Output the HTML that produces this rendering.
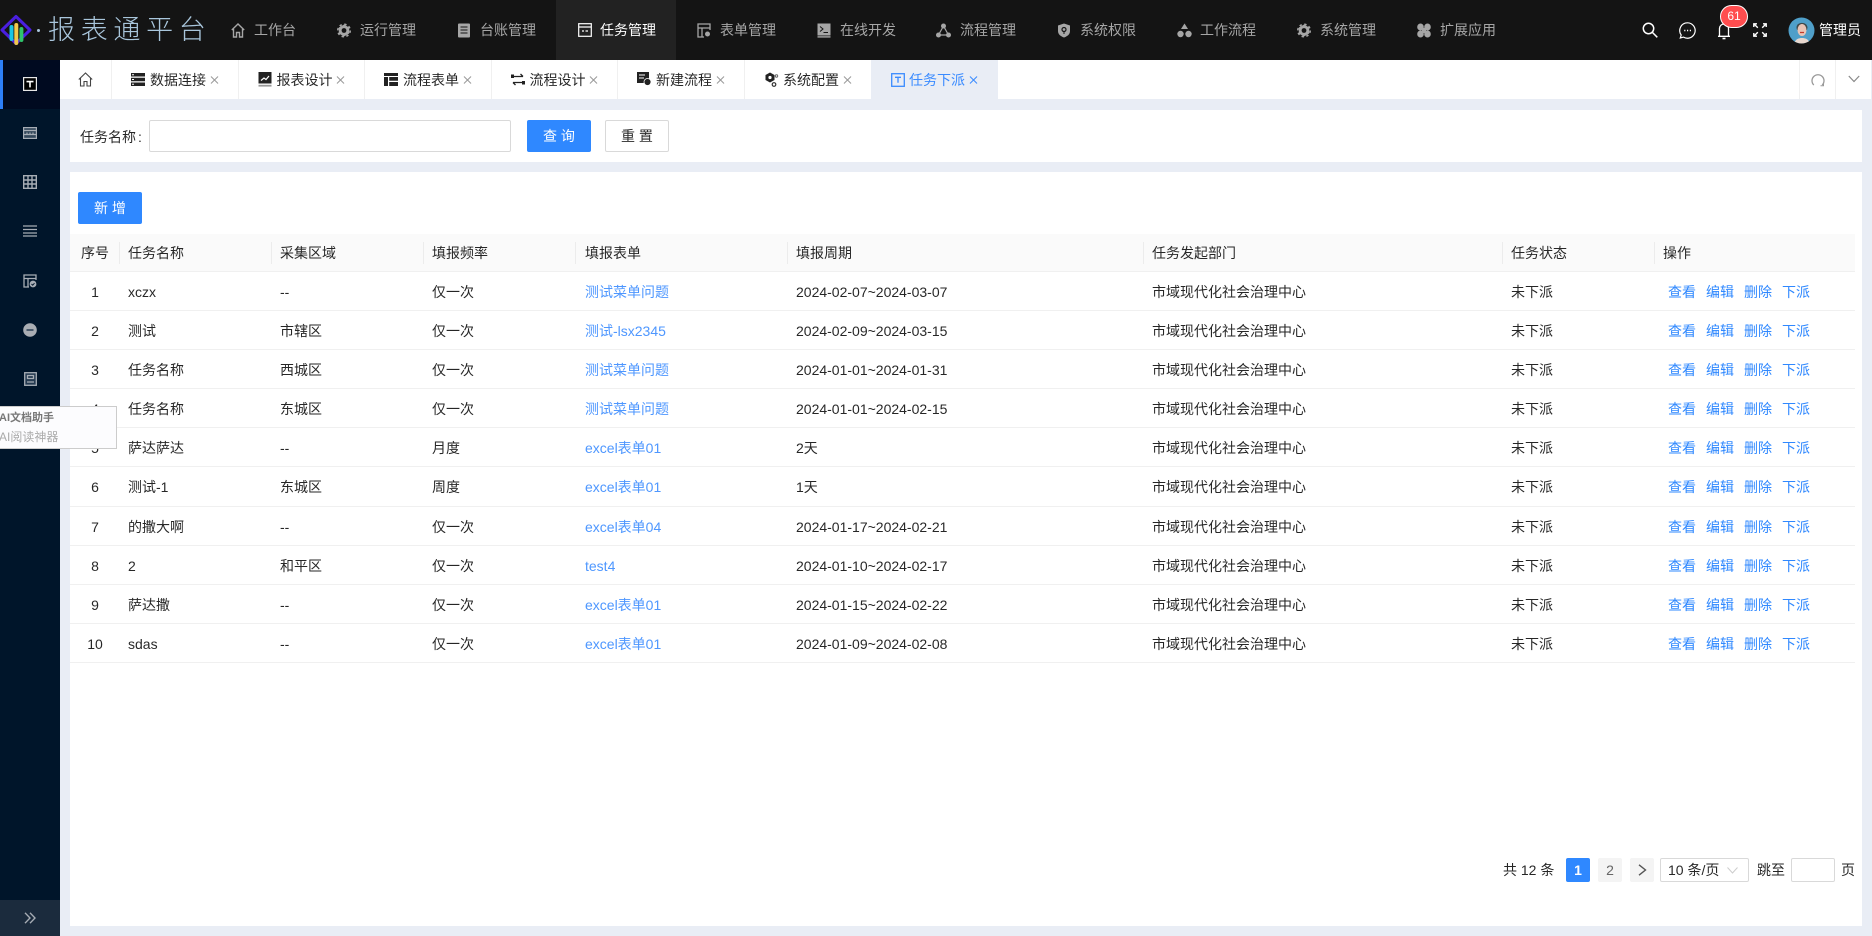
<!DOCTYPE html>
<html lang="zh"><head><meta charset="utf-8"><title>任务下派</title>
<style>
*{box-sizing:border-box}
html,body{margin:0;padding:0;width:1872px;height:936px;overflow:hidden;background:#e9edf5;font:14px/22px "Liberation Sans","Noto Sans CJK SC",sans-serif;color:rgba(0,0,0,.85)}
.a{position:absolute;white-space:nowrap}
svg{position:absolute;display:block;overflow:visible}
#top{position:absolute;left:0;top:0;width:1872px;height:60px;background:#141414}
#top .n{position:absolute;top:19px;color:#a6a6a6;white-space:nowrap}
#side{position:absolute;left:0;top:60px;width:60px;height:876px;background:#00152a}
#tabs{position:absolute;left:60px;top:60px;width:1811px;height:39px;background:#fff}
.tab{position:absolute;top:0;height:39px;width:126.5px;border-right:1px solid #f0f0f0;color:rgba(0,0,0,.85)}
.tab span{position:absolute;left:38px;top:9px;white-space:nowrap}
.tab u{position:absolute;left:98px;top:16px;width:8px;height:8px;text-decoration:none}
.tab u:before,.tab u:after{content:"";position:absolute;left:3.5px;top:-1px;width:1px;height:10px;background:#999;transform:rotate(45deg)}
.tab u:after{transform:rotate(-45deg)}
.tab.on{background:#e9edf5;color:#3a8bff;border-right:0}
.tab.on u:before,.tab.on u:after{background:#3a8bff}
.card{position:absolute;background:#fff}
.btn{position:absolute;height:32px;width:64px;border-radius:2px;background:#2f88ff;color:#fff;text-align:center;line-height:32px}
.btn.w{background:#fff;border:1px solid #d9d9d9;color:rgba(0,0,0,.85);line-height:31px}
#tbl{position:absolute;left:70px;top:234px;width:1785px}
.r{display:flex;height:39.1px;border-bottom:1px solid #f0f0f0;background:#fff;line-height:41px}
.r>div{flex:none;padding-left:8px;white-space:nowrap;position:relative}
.r>div:nth-child(1){width:50px;padding:0;text-align:center}
.r>div:nth-child(2),.r>div:nth-child(3),.r>div:nth-child(4){width:152px}
.r>div:nth-child(5){width:212px;padding-left:9px}
.r>div:nth-child(6){width:356px}
.r>div:nth-child(7){width:359px}
.r>div:nth-child(8){width:152px}
.r>div:nth-child(9){width:200px;padding-left:13px;color:#2f88ff}
.r>div:nth-child(9) b{font-weight:400;margin-right:10px}
.r>div:nth-child(5){color:#4e97ff}
.h{background:#fafafa;height:38px;line-height:38px}
.h>div:nth-child(5){color:rgba(0,0,0,.85)}
.h>div:nth-child(9){color:rgba(0,0,0,.85);padding-left:8px}
.h>div:not(:last-child):after{content:"";position:absolute;right:0;top:8px;height:22px;width:1px;background:#ececec}
.pg{position:absolute;top:858px;width:24px;height:24px;border-radius:2px;background:#f4f4f4;text-align:center;line-height:24px;color:#666}
</style></head><body>

<div id="top">
<svg style="left:0;top:14px" width="34" height="32" viewBox="0 0 34 32"><path d="M16 2.5 30 16 16 29.5 2 16Z" fill="none" stroke="#4a1fe0" stroke-width="3" stroke-linejoin="round"/><rect x="9.5" y="11" width="4" height="16" rx="2" fill="#19c6e6"/><rect x="14.3" y="9" width="4" height="22" rx="2" fill="#f2c94c"/><rect x="19.4" y="13" width="4" height="15" rx="2" fill="#2fc56b"/></svg>
<div class="a" style="left:37px;top:29px;width:3px;height:3px;border-radius:50%;background:#a9c6dc"></div>
<div class="a" style="left:48px;top:12px;font-size:27px;line-height:36px;letter-spacing:5.7px;color:#a9c6dc;font-weight:300">报表通平台</div>

<div class="a" style="left:556px;top:0;width:120px;height:60px;background:#222"></div>

<svg style="left:231px;top:23px" width="14" height="15" viewBox="0 0 14 15" fill="none" stroke="#a6a6a6" stroke-width="1.4"><path d="M.8 7 7 1l6.2 6M2.5 6v8h3V9.5h3V14h3V6"/></svg><div class="n" style="left:254px">工作台</div>
<svg style="left:337px;top:23px" width="14" height="15" viewBox="0 0 14 15"><circle cx="7" cy="7.500" r="6.200" fill="none" stroke="#a6a6a6" stroke-width="1.600" stroke-dasharray="2.400 2.470"/><path d="M7 1.500 12.200 4.500v6L7 13.500 1.800 10.500v-6Z" fill="#a6a6a6"/><circle cx="7" cy="7.500" r="2.400" fill="#141414"/></svg><div class="n" style="left:360px">运行管理</div>
<svg style="left:457px;top:23px" width="14" height="15" viewBox="0 0 14 15"><rect x="1" y="0.5" width="12" height="14" rx="1" fill="#a6a6a6"/><path d="M3.5 4h7M3.5 7h7M3.500 10h7" stroke="#141414"/></svg><div class="n" style="left:480px">台账管理</div>
<svg style="left:578px;top:23px" width="14" height="14" viewBox="0 0 14 14" fill="none" stroke="#fff" stroke-width="1.2"><rect x=".7" y=".7" width="12.6" height="12.6"/><path d="M.7 4h12.6M4 8H6M7.500 8H10" /></svg><div class="n" style="left:600px;color:#fff">任务管理</div>
<svg style="left:697px;top:23px" width="14" height="15" viewBox="0 0 14 15" fill="none" stroke="#a6a6a6" stroke-width="1.3"><path d="M13 7V1H1v13h6M1 5h12M5 5v9"/><circle cx="10.500" cy="11" r="2.500" fill="#a6a6a6" stroke="none"/></svg><div class="n" style="left:720px">表单管理</div>
<svg style="left:817px;top:23px" width="14" height="15" viewBox="0 0 14 15"><rect x=".5" y=".5" width="13" height="12" fill="#a6a6a6"/><rect x=".5" y="13.200" width="13" height="1.400" fill="#a6a6a6"/><path d="M3 3.500l3 2.500-3 2.500M6.500 9.500H11" fill="none" stroke="#141414"/></svg><div class="n" style="left:840px">在线开发</div>
<svg style="left:936px;top:23px" width="15" height="15" viewBox="0 0 15 15" fill="#a6a6a6"><circle cx="7.500" cy="3" r="2.500"/><circle cx="2.500" cy="12" r="2.500"/><circle cx="12.500" cy="12" r="2.500"/><path d="M7.500 3 2.500 12h10Z" fill="none" stroke="#a6a6a6" stroke-width="1.200"/></svg><div class="n" style="left:960px">流程管理</div>
<svg style="left:1057px;top:23px" width="14" height="15" viewBox="0 0 14 15"><path d="M7 .5 13 2.500V8c0 3.500-3 5.500-6 6.500C4 13.500 1 11.500 1 8V2.500Z" fill="#a6a6a6"/><circle cx="7" cy="6.500" r="2" fill="none" stroke="#141414" stroke-width="1.200"/><path d="M7 8.500V11" stroke="#141414"/></svg><div class="n" style="left:1080px">系统权限</div>
<svg style="left:1177px;top:23px" width="15" height="15" viewBox="0 0 15 15" fill="#a6a6a6"><path d="M7.500.5 11 6H4Z"/><circle cx="3.500" cy="11" r="3.200"/><circle cx="11.500" cy="11" r="3.200"/></svg><div class="n" style="left:1200px">工作流程</div>
<svg style="left:1297px;top:23px" width="14" height="15" viewBox="0 0 14 15"><circle cx="7" cy="7.500" r="6.200" fill="none" stroke="#a6a6a6" stroke-width="1.600" stroke-dasharray="2.400 2.470"/><path d="M7 1.500 12.200 4.500v6L7 13.500 1.800 10.500v-6Z" fill="#a6a6a6"/><circle cx="7" cy="7.500" r="2.400" fill="#141414"/></svg><div class="n" style="left:1320px">系统管理</div>
<svg style="left:1417px;top:23px" width="14" height="15" viewBox="0 0 14 15" fill="#a6a6a6"><ellipse cx="3.500" cy="4" rx="3.300" ry="3.500"/><ellipse cx="10.500" cy="4" rx="3.300" ry="3.500"/><ellipse cx="3.500" cy="11" rx="3.300" ry="3.500"/><ellipse cx="10.500" cy="11" rx="3.300" ry="3.500"/><rect x="5" y="5" width="4" height="5"/></svg><div class="n" style="left:1440px">扩展应用</div>

<svg style="left:1642px;top:22px" width="16" height="16" viewBox="0 0 16 16" fill="none" stroke="#fff" stroke-width="1.500"><circle cx="6.500" cy="6.500" r="5.200"/><path d="M10.500 10.500 15.300 15.300"/></svg>
<svg style="left:1679px;top:22px" width="17" height="17" viewBox="0 0 17 17" fill="none" stroke="#fff" stroke-width="1.200"><path d="M8.500.8a7.700 7.700 0 1 1-4 14.300l-3.200.9.900-3A7.700 7.700 0 0 1 8.500.8Z"/><path d="M5.200 8.500h1.200M8 8.500h1.200M10.800 8.500h1.200" stroke-width="1.400"/></svg>
<svg style="left:1717px;top:22px" width="14" height="18" viewBox="0 0 14 18" fill="none" stroke="#fff" stroke-width="1.300"><path d="M1 14.300h12M2.500 14V6.500a4.500 4.500 0 0 1 9 0V14"/><path d="M5.500 16.500h3" stroke-width="1.600"/></svg>
<div class="a" style="left:1720px;top:5px;width:28px;height:23px;border-radius:12px;background:#ff4d4f;border:1px solid #fff;color:#fff;font-size:12px;line-height:21px;text-align:center">61</div>
<svg style="left:1753px;top:23px" width="14" height="14" viewBox="0 0 14 14" fill="none" stroke="#fff" stroke-width="1.400"><path d="M.8 4V.8H4M.8.8l4 4M13.200 4V.8H10M13.200.8l-4 4M.8 10v3.200H4M.8 13.200l4-4M13.200 10v3.200H10M13.200 13.200l-4-4"/></svg>
<svg style="left:1788px;top:17px" width="27" height="27" viewBox="0 0 27 27"><clipPath id="av"><circle cx="13.500" cy="13.500" r="13"/></clipPath><g clip-path="url(#av)"><rect width="27" height="27" fill="#4f9fc9"/><path d="M8.500 11C8 4.500 19 4 19.500 10.500L19 13H9Z" fill="#3f4a4c"/><ellipse cx="14" cy="13" rx="4.500" ry="6" fill="#e9c4b6"/><path d="M12 15.500h4" stroke="#c0392b" stroke-width="1.200"/><path d="M6 27c1-5 5-6 8-6s7 1 8 6Z" fill="#e9d8cf"/></g></svg>
<div class="a" style="left:1819px;top:19px;color:#fff">管理员</div>
</div>

<div id="side">
<div class="a" style="left:0;top:0;width:60px;height:49px;background:#000a20"></div>
<div class="a" style="left:0;top:0;width:3px;height:49px;background:#2d7ff9"></div>
<svg style="left:23px;top:17px" width="14" height="14" viewBox="0 0 14 14"><rect x=".6" y=".6" width="12.800" height="12.800" fill="#000" stroke="#e6e6e6" stroke-width="1.200"/><path d="M3.500 3.800h7v1.600H7.800v5H6.200v-5H3.500Z" fill="#fff"/></svg>
<svg style="left:23px;top:66px" width="14" height="14" viewBox="0 0 14 14" fill="none" stroke="#a7adb5" stroke-width="1.200"><rect x=".6" y="1.600" width="12.800" height="10.800" fill="#33475a"/><path d="M.6 4.500h12.800M.6 8.500h12.800M4 6.500v2M7 6.500v2M10 6.500v2"/></svg>
<svg style="left:23px;top:115px" width="14" height="14" viewBox="0 0 14 14" fill="none" stroke="#a7adb5" stroke-width="1.400"><rect x=".7" y=".7" width="12.600" height="12.600"/><path d="M.7 5h12.600M.7 9h12.600M5 .7v12.600M9 .7v12.600"/></svg>
<svg style="left:23px;top:165px" width="14" height="12" viewBox="0 0 14 12" stroke="#a7adb5" stroke-width="1.300"><path d="M0 1h14M0 4.500h14M0 8h14M0 11h14"/></svg>
<svg style="left:23px;top:214px" width="14" height="14" viewBox="0 0 14 14" fill="none" stroke="#a7adb5" stroke-width="1.300"><path d="M13 6V1H1v12h5M1 4.500h12M5 4.500V13"/><circle cx="10" cy="10" r="3.400" fill="#a7adb5" stroke="none"/><path d="M8.500 10l1.200 1.200 1.800-2" stroke="#00152a" stroke-width="1"/></svg>
<svg style="left:23px;top:263px" width="14" height="14" viewBox="0 0 14 14"><circle cx="7" cy="7" r="6.800" fill="#a9adb3"/><rect x="3.500" y="6.200" width="7" height="1.600" fill="#33475a"/></svg>
<svg style="left:24px;top:312px" width="13" height="14" viewBox="0 0 13 14" fill="none" stroke="#a7adb5" stroke-width="1.300"><rect x=".7" y=".7" width="11.600" height="12.600" fill="#243a50"/><path d="M3.500 3.500h6v3h-6ZM3 10h7"/></svg>
<div class="a" style="left:0;top:840px;width:60px;height:36px;background:#1b2b3d"></div>
<svg style="left:24px;top:852px" width="12" height="12" viewBox="0 0 12 12" fill="none" stroke="#a7adb5" stroke-width="1.400"><path d="M1 .8 6 6 1 11.200M6 .8 11 6 6 11.200"/></svg>
</div>

<div id="tabs">
<div class="tab" style="left:0;width:52px"><svg style="left:18px;top:12px" width="15" height="15" viewBox="0 0 15 15" fill="none" stroke="#444" stroke-width="1.100"><path d="M.8 7.500 7.500 1l6.700 6.500M2.500 6v8h3.500V9.500h3V14h3.500V6"/></svg></div>
<div class="tab" style="left:52px"><svg style="left:19px;top:13px" width="14" height="13" viewBox="0 0 14 13"><path d="M0 0h14v3.500H0ZM0 4.700h14v3.600H0ZM0 9.500h14V13H0Z" fill="#222"/><path d="M1 1.700h2M1 6.500h2M1 11.200h2" stroke="#fff"/></svg><span>数据连接</span><u></u></div>
<div class="tab" style="left:178.500px"><svg style="left:19px;top:12px" width="14" height="15" viewBox="0 0 14 15"><rect x=".5" width="13" height="11.500" fill="#222"/><rect x=".5" y="12.800" width="13" height="1.800" fill="#999"/><path d="M3 8.500 6 6l2 1.500L11 4" fill="none" stroke="#fff" stroke-width="1.200"/></svg><span>报表设计</span><u></u></div>
<div class="tab" style="left:305px"><svg style="left:19px;top:13px" width="14" height="13" viewBox="0 0 14 13"><path d="M0 0h14v3H0ZM0 4h4v9H0ZM5.200 4H14v3.800H5.200ZM5.200 9H14v4H5.200Z" fill="#222"/></svg><span>流程表单</span><u></u></div>
<div class="tab" style="left:431.500px"><svg style="left:19px;top:13px" width="14" height="13" viewBox="0 0 14 13" fill="none" stroke="#222" stroke-width="1.300"><path d="M1 3.500h11M9.500 1 12 3.500M13 9.500H2M4.500 12 2 9.500"/><rect x="0" y="1.500" width="3" height="3.500" fill="#222" stroke="none"/><rect x="11" y="8" width="3" height="3.500" fill="#222" stroke="none"/></svg><span>流程设计</span><u></u></div>
<div class="tab" style="left:558px"><svg style="left:19px;top:12px" width="14" height="15" viewBox="0 0 14 15"><rect width="12" height="11" fill="#222"/><path d="M2 3h6M2 6h5" stroke="#fff"/><circle cx="10.500" cy="10" r="3.500" fill="#222" stroke="#fff" stroke-width=".8"/></svg><span>新建流程</span><u></u></div>
<div class="tab" style="left:685px"><svg style="left:20px;top:12px" width="14" height="15" viewBox="0 0 14 15"><path d="M5 .5 9.500 3v5L5 10.500.5 8V3Z" fill="#222"/><circle cx="5" cy="5.500" r="1.600" fill="#fff"/><circle cx="11.500" cy="4" r="1.200" fill="none" stroke="#666"/><circle cx="9" cy="12.500" r="1.800" fill="none" stroke="#333" stroke-width="1.200"/></svg><span>系统配置</span><u></u></div>
<div class="tab on" style="left:811px"><svg style="left:20px;top:13px" width="14" height="14" viewBox="0 0 14 14" fill="none" stroke="#3a8bff" stroke-width="1.300"><rect x=".7" y=".7" width="12.600" height="12.600"/><path d="M4 4.300h6M7 4.300v5.500"/></svg><span>任务下派</span><u></u></div>
<div class="a" style="left:1739px;top:0;width:1px;height:39px;background:#f0f0f0"></div>
<div class="a" style="left:1775px;top:0;width:1px;height:39px;background:#f0f0f0"></div>
<svg style="left:1751px;top:13px" width="14" height="14" viewBox="0 0 14 14" fill="none" stroke="#999" stroke-width="1.300"><path d="M2.800 12A6 6 0 1 1 11.200 12"/><path d="M9.500 12.800h3v-2.200" stroke-width="1"/></svg>
<svg style="left:1788px;top:15px" width="12" height="8" viewBox="0 0 12 8" fill="none" stroke="#888" stroke-width="1.200"><path d="M.8 1 6 6.500 11.200 1"/></svg>
</div>

<div class="card" style="left:70px;top:110px;width:1792px;height:52px"></div>
<div class="a" style="left:80px;top:126px">任务名称<span style="margin-left:2px">:</span></div>
<div class="a" style="left:149px;top:120px;width:362px;height:32px;background:#fff;border:1px solid #d9d9d9;border-radius:2px"></div>
<div class="btn" style="left:527px;top:120px;line-height:33px">查 询</div>
<div class="btn w" style="left:605px;top:120px">重 置</div>

<div class="card" style="left:70px;top:172px;width:1792px;height:754px"></div>
<div class="btn" style="left:78px;top:192px">新 增</div>

<div id="tbl">
<div class="r h"><div>序号</div><div>任务名称</div><div>采集区域</div><div>填报频率</div><div>填报表单</div><div>填报周期</div><div>任务发起部门</div><div>任务状态</div><div>操作</div></div>
<div class="r"><div>1</div><div>xczx</div><div>--</div><div>仅一次</div><div>测试菜单问题</div><div>2024-02-07~2024-03-07</div><div>市域现代化社会治理中心</div><div>未下派</div><div><b>查看</b><b>编辑</b><b>删除</b><b>下派</b></div></div>
<div class="r"><div>2</div><div>测试</div><div>市辖区</div><div>仅一次</div><div>测试-lsx2345</div><div>2024-02-09~2024-03-15</div><div>市域现代化社会治理中心</div><div>未下派</div><div><b>查看</b><b>编辑</b><b>删除</b><b>下派</b></div></div>
<div class="r"><div>3</div><div>任务名称</div><div>西城区</div><div>仅一次</div><div>测试菜单问题</div><div>2024-01-01~2024-01-31</div><div>市域现代化社会治理中心</div><div>未下派</div><div><b>查看</b><b>编辑</b><b>删除</b><b>下派</b></div></div>
<div class="r"><div>4</div><div>任务名称</div><div>东城区</div><div>仅一次</div><div>测试菜单问题</div><div>2024-01-01~2024-02-15</div><div>市域现代化社会治理中心</div><div>未下派</div><div><b>查看</b><b>编辑</b><b>删除</b><b>下派</b></div></div>
<div class="r"><div>5</div><div>萨达萨达</div><div>--</div><div>月度</div><div>excel表单01</div><div>2天</div><div>市域现代化社会治理中心</div><div>未下派</div><div><b>查看</b><b>编辑</b><b>删除</b><b>下派</b></div></div>
<div class="r"><div>6</div><div>测试-1</div><div>东城区</div><div>周度</div><div>excel表单01</div><div>1天</div><div>市域现代化社会治理中心</div><div>未下派</div><div><b>查看</b><b>编辑</b><b>删除</b><b>下派</b></div></div>
<div class="r"><div>7</div><div>的撒大啊</div><div>--</div><div>仅一次</div><div>excel表单04</div><div>2024-01-17~2024-02-21</div><div>市域现代化社会治理中心</div><div>未下派</div><div><b>查看</b><b>编辑</b><b>删除</b><b>下派</b></div></div>
<div class="r"><div>8</div><div>2</div><div>和平区</div><div>仅一次</div><div>test4</div><div>2024-01-10~2024-02-17</div><div>市域现代化社会治理中心</div><div>未下派</div><div><b>查看</b><b>编辑</b><b>删除</b><b>下派</b></div></div>
<div class="r"><div>9</div><div>萨达撒</div><div>--</div><div>仅一次</div><div>excel表单01</div><div>2024-01-15~2024-02-22</div><div>市域现代化社会治理中心</div><div>未下派</div><div><b>查看</b><b>编辑</b><b>删除</b><b>下派</b></div></div>
<div class="r"><div>10</div><div>sdas</div><div>--</div><div>仅一次</div><div>excel表单01</div><div>2024-01-09~2024-02-08</div><div>市域现代化社会治理中心</div><div>未下派</div><div><b>查看</b><b>编辑</b><b>删除</b><b>下派</b></div></div>
</div>

<div class="a" style="left:1503px;top:859px">共 12 条</div>
<div class="pg" style="left:1566px;background:#2f88ff;color:#fff;font-weight:700">1</div>
<div class="pg" style="left:1598px">2</div>
<div class="pg" style="left:1630px"><svg style="left:8px;top:6px" width="9" height="12" viewBox="0 0 9 12" fill="none" stroke="#555" stroke-width="1.400"><path d="M1 .8 7.500 6 1 11.200"/></svg></div>
<div class="a" style="left:1660px;top:858px;width:89px;height:24px;border:1px solid #d9d9d9;border-radius:2px;background:#fff"></div>
<div class="a" style="left:1668px;top:859px">10 条/页</div>
<svg style="left:1727px;top:867px" width="11" height="7" viewBox="0 0 11 7" fill="none" stroke="#ccc" stroke-width="1"><path d="M.5.500 5.500 6l5-5.500"/></svg>
<div class="a" style="left:1757px;top:859px">跳至</div>
<div class="a" style="left:1791px;top:858px;width:44px;height:24px;border:1px solid #d9d9d9;border-radius:2px;background:#fff"></div>
<div class="a" style="left:1841px;top:859px">页</div>

<div class="a" style="left:0;top:406px;width:117px;height:43px;background:#fcfcfe;border:1px solid #ccc;border-left:0;font-size:12px;z-index:5">
<div class="a" style="left:-1px;top:1px;line-height:20px;color:#777;font-weight:700;font-size:11px">AI文档助手</div>
<div class="a" style="left:-1px;top:20px;line-height:20px;color:#aaa">AI阅读神器</div>
</div>
</body></html>
